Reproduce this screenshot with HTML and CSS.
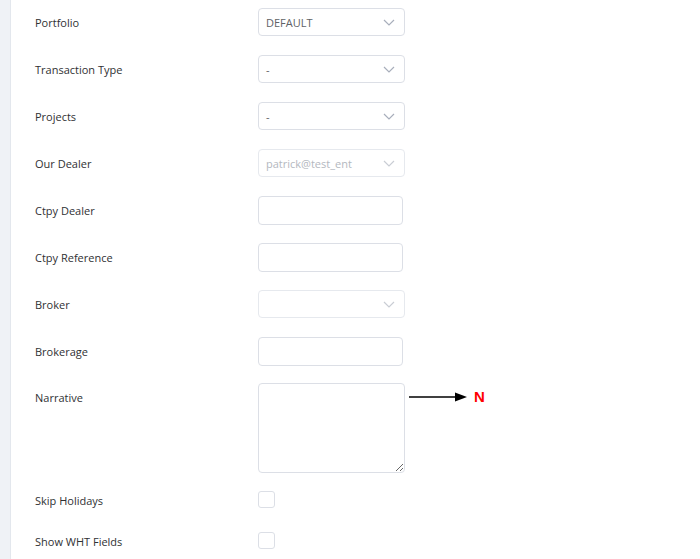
FILE: index.html
```html
<!DOCTYPE html>
<html>
<head>
<meta charset="utf-8">
<link rel="stylesheet" href="styles.css">
</head>
<body>
<div class="page">
  <div class="strip"></div>
  <form class="form">
    <div class="row">
      <label class="label">Portfolio</label>
      <div class="select"><span class="value">DEFAULT</span><svg class="chev" viewBox="0 0 12 7" width="12" height="7"><path d="M1 1l5 5 5-5" fill="none" stroke="currentColor" stroke-width="1.2"/></svg></div>
    </div>
    <div class="row">
      <label class="label">Transaction Type</label>
      <div class="select"><span class="value">-</span><svg class="chev" viewBox="0 0 12 7" width="12" height="7"><path d="M1 1l5 5 5-5" fill="none" stroke="currentColor" stroke-width="1.2"/></svg></div>
    </div>
    <div class="row">
      <label class="label">Projects</label>
      <div class="select"><span class="value">-</span><svg class="chev" viewBox="0 0 12 7" width="12" height="7"><path d="M1 1l5 5 5-5" fill="none" stroke="currentColor" stroke-width="1.2"/></svg></div>
    </div>
    <div class="row">
      <label class="label">Our Dealer</label>
      <div class="select disabled"><span class="value">patrick@test_ent</span><svg class="chev" viewBox="0 0 12 7" width="12" height="7"><path d="M1 1l5 5 5-5" fill="none" stroke="currentColor" stroke-width="1.2"/></svg></div>
    </div>
    <div class="row">
      <label class="label">Ctpy Dealer</label>
      <div class="input"></div>
    </div>
    <div class="row">
      <label class="label">Ctpy Reference</label>
      <div class="input"></div>
    </div>
    <div class="row">
      <label class="label">Broker</label>
      <div class="select disabled"><span class="value"></span><svg class="chev" viewBox="0 0 12 7" width="12" height="7"><path d="M1 1l5 5 5-5" fill="none" stroke="currentColor" stroke-width="1.2"/></svg></div>
    </div>
    <div class="row">
      <label class="label">Brokerage</label>
      <div class="input"></div>
    </div>
    <div class="row row-top">
      <label class="label label-top">Narrative</label>
      <textarea class="textarea"></textarea>
      <div class="note">
        <svg class="arrow" viewBox="0 0 58 10" width="58" height="10"><path d="M0 5H47" stroke="#000" stroke-width="1.3"/><path d="M46 0.5L58 5 46 9.5z" fill="#000"/></svg>
        <span class="mark">N</span>
      </div>
    </div>
    <div class="row row-check">
      <label class="label label-check">Skip Holidays</label>
      <span class="checkbox"></span>
    </div>
    <div class="row row-check">
      <label class="label label-check">Show WHT Fields</label>
      <span class="checkbox"></span>
    </div>
  </form>
</div>
</body>
</html>
```

FILE: styles.css
```css
html, body {
  margin: 0;
  padding: 0;
  background: #ffffff;
}
body {
  font-family: "Open Sans", "Noto Sans", sans-serif;
  font-size: 11px;
  color: #303133;
  width: 700px;
  height: 559px;
  overflow: hidden;
}
.page {
  display: flex;
  height: 559px;
}
.strip {
  width: 10px;
  flex: none;
  background: #eff2f6;
  border-right: 1px solid #e3e7ed;
}
.form {
  display: flex;
  flex-direction: column;
  gap: 19px;
  padding: 8px 0 0 24px;
}
.row {
  display: flex;
  align-items: center;
  height: 28px;
}
.row-top {
  align-items: flex-start;
  height: 90px;
}
.row-check {
  align-items: flex-start;
  height: 22px;
}
.row-top + .row-check {
  margin-top: -2px;
}
.label {
  width: 223px;
  flex: none;
  color: #303133;
  line-height: 16px;
  padding-top: 2px;
}
.label-top {
  margin-top: 4px;
}
.label-check {
  line-height: 17px;
  padding-top: 1px;
}
.select {
  box-sizing: border-box;
  width: 147px;
  height: 28px;
  border: 1px solid #dcdfe6;
  border-radius: 4px;
  display: flex;
  align-items: center;
  justify-content: space-between;
  padding: 0 8px 0 7px;
  background: #fff;
}
.select .value {
  color: #606266;
}
.chev {
  color: #a8aebb;
  margin-right: 1px;
}
.select.disabled {
  border-color: #e6e9ee;
}
.select.disabled .value {
  color: #b4b8c0;
}
.select.disabled .chev {
  color: #c9cdd4;
}
.input {
  box-sizing: border-box;
  width: 145px;
  height: 29px;
  border: 1px solid #dcdfe6;
  border-radius: 4px;
  background: #fff;
}
.textarea {
  box-sizing: border-box;
  width: 147px;
  height: 90px;
  border: 1px solid #dcdfe6;
  border-radius: 4px;
  margin: -1px 0 0 0;
  padding: 5px 8px;
  font-family: inherit;
  background: #fff;
  outline: none;
}
.note {
  display: flex;
  align-items: center;
  margin: 5px 0 0 4px;
  gap: 7px;
}
.arrow {
  display: block;
}
.mark {
  color: #ff0000;
  font-family: "Liberation Sans", Arial, sans-serif;
  font-weight: bold;
  font-size: 15px;
  line-height: 16px;
}
.checkbox {
  box-sizing: border-box;
  width: 17px;
  height: 17px;
  border: 1px solid #dcdfe6;
  border-radius: 3px;
  background: #fff;
}
```
